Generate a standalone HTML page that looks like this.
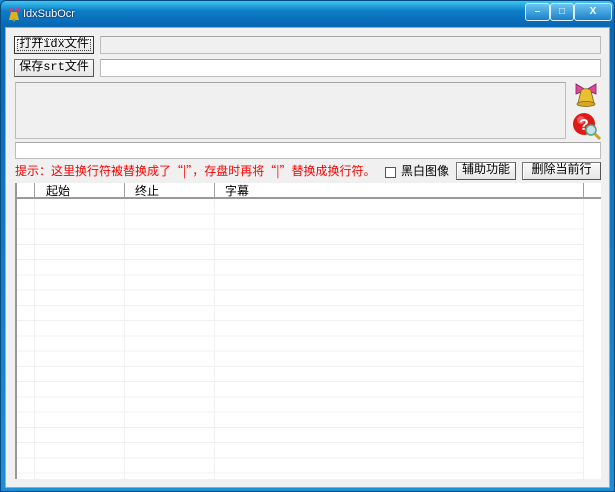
<!DOCTYPE html>
<html><head><meta charset="utf-8"><style>
*{margin:0;padding:0;box-sizing:border-box}
body{width:615px;height:492px;overflow:hidden;font-family:"Liberation Sans","Noto Sans CJK SC",sans-serif;font-size:12px;background:#1a8ad0}
.win{position:absolute;left:0;top:0;width:615px;height:492px;background:linear-gradient(#3cc8f0,#0e7cc6 10px,#0868b4 24px,#1c8fd6);border:1px solid #064a80;border-radius:6px 6px 0 0}
.title{position:absolute;left:22px;top:7px;color:#fff;font-size:11px;text-shadow:0 0 2px #003}
.client{position:absolute;left:4px;top:26px;width:605px;height:461px;background:#f0f0f0;border:1px solid #7fb4d8}
.a{position:absolute}
.btn{position:absolute;background:linear-gradient(#fafafa,#e6e6e6);border:1px solid #777;border-right-color:#555;border-bottom-color:#555;box-shadow:inset 1px 1px #fff;text-align:center;font-size:12px;line-height:15px;color:#000;font-family:"Liberation Mono","Noto Sans CJK SC",monospace}
.tb{position:absolute;border:1px solid #bdbdbd;border-top-color:#a5a5a5;background:#fff}
.cap{position:absolute;top:2px;height:18px;border:1px solid #dfeefa;border-radius:3px;background:linear-gradient(#6ac4f0,#1a80c8);color:#fff;font-size:10px;text-align:center;line-height:16px;font-weight:bold}
.grid{position:absolute;left:14px;top:182px;width:586px;height:296px;background:#fff;border-left:2px solid #999}
.hdr{position:absolute;left:0;top:0;height:16px;width:584px;background:#fff;border-bottom:2px solid #999}
.hc{position:absolute;top:0;height:15px;border-right:1px solid #a0a0a0;padding-left:10px;line-height:15px;font-family:"Noto Sans CJK SC",sans-serif}
.rows{position:absolute;left:0;top:16px;width:566px;height:280px;background:repeating-linear-gradient(to bottom,transparent 0,transparent 14.25px,#f0f0f0 14.25px,#f0f0f0 15.25px)}
.vl{position:absolute;top:16px;height:280px;width:1px;background:#f0f0f0}
</style></head><body>
<div class="win">
<svg class="a" style="left:6px;top:5px" width="14" height="16" viewBox="0 0 14 16"><path d="M2 1l5 3 5-3v5l-5-2-5 2z" fill="#d03a8a"/><path d="M4 6h6l2 8H2z" fill="#e0b020"/><circle cx="7" cy="14" r="1.5" fill="#7a4"/></svg>
<div class="title">IdxSubOcr</div>
<div class="cap" style="left:524px;width:25px">&#8211;</div>
<div class="cap" style="left:549px;width:24px">&#9633;</div>
<div class="cap" style="left:573px;width:38px">X</div>
<div class="client"></div>
<div class="btn" style="left:13px;top:35px;width:80px;height:18px;border:1px solid #333;outline:1px dotted #444;outline-offset:-4px">打开idx文件</div>
<div class="tb" style="left:99px;top:35px;width:501px;height:18px;background:#f0f0f0"></div>
<div class="btn" style="left:13px;top:58px;width:80px;height:18px">保存srt文件</div>
<div class="tb" style="left:99px;top:58px;width:501px;height:18px"></div>
<div class="tb" style="left:14px;top:81px;width:551px;height:57px;background:#f0f0f0"></div>
<svg class="a" style="left:570px;top:80px" width="32" height="30" viewBox="0 0 32 30"><path d="M5 3l10 6 10-6v10l-10-4-10 4z" fill="#e0489a" stroke="#802050" stroke-width=".8"/><path d="M10 10c0-3 10-3 10 0l3 12H7z" fill="#e8c030" stroke="#806010" stroke-width=".8"/><ellipse cx="15" cy="23" rx="9" ry="2.5" fill="#d8a820" stroke="#806010" stroke-width=".8"/></svg>
<svg class="a" style="left:570px;top:110px" width="32" height="30" viewBox="0 0 32 30"><circle cx="13" cy="13" r="11" fill="#e01818"/><circle cx="10" cy="9" r="4" fill="#ff8080" opacity=".6"/><text x="8" y="19" font-size="16" fill="#fff" font-weight="bold" font-family="Liberation Sans">?</text><circle cx="20" cy="19" r="5" fill="#cde" stroke="#4a7" stroke-width="1.5"/><path d="M24 23l5 5" stroke="#d0a020" stroke-width="3"/></svg>
<div class="tb" style="left:14px;top:141px;width:586px;height:17px"></div>
<div class="a" style="left:14px;top:162px;color:#ff0000;font-size:12px;line-height:16px;white-space:nowrap;font-family:'Noto Sans CJK SC',sans-serif">提示：这里换行符被替换成了“|”，存盘时再将“|”替换成换行符。</div>
<div class="a" style="left:384px;top:166px;width:11px;height:11px;border:1px solid #555;background:#fff"></div>
<div class="a" style="left:400px;top:162px;line-height:16px;font-family:'Noto Sans CJK SC',sans-serif">黑白图像</div>
<div class="btn" style="left:455px;top:161px;width:60px;height:18px">辅助功能</div>
<div class="btn" style="left:521px;top:161px;width:79px;height:18px">删除当前行</div>
<div class="grid">
<div class="rows"></div>
<div class="vl" style="left:17px"></div><div class="vl" style="left:107px"></div><div class="vl" style="left:197px"></div><div class="vl" style="left:566px"></div>
<div class="hdr">
<div class="hc" style="left:0;width:18px"></div>
<div class="hc" style="left:18px;width:90px;padding-left:11px">起始</div>
<div class="hc" style="left:108px;width:90px">终止</div>
<div class="hc" style="left:198px;width:369px">字幕</div>
</div>
</div>
</div>
</body></html>
